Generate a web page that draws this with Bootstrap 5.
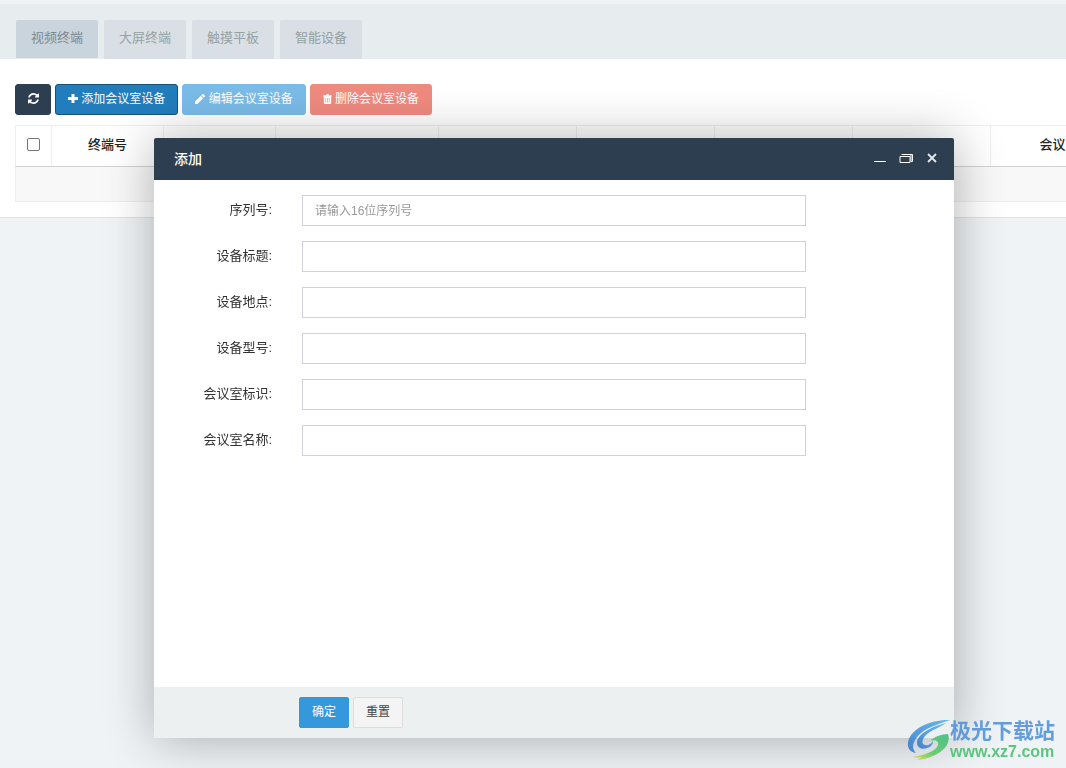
<!DOCTYPE html>
<html lang="zh-CN">
<head>
<meta charset="utf-8">
<meta name="viewport" content="width=device-width, initial-scale=1">
<title>会议室设备</title>
<link href="https://cdn.jsdelivr.net/npm/bootstrap@5.3.0/dist/css/bootstrap.min.css" rel="stylesheet">
<style>
  body { background: #eff3f6; font: 13px/20px "Liberation Sans", "Noto Sans CJK SC", sans-serif; color: #333; min-height: 100vh; overflow: hidden; }
  .device-tabs { background: #e7ecef; padding: 16px 16px 0; gap: 6px; border: 0; }
  .device-tabs .nav-link { background: #d9dfe5; color: #95a1a3; border: 0; border-radius: 2px 2px 0 0; margin: 0; padding: 8px 15px 11px; }
  .device-tabs .nav-link.active { background: #c9d4dd; color: #7d888c; margin-bottom: 1px; padding-bottom: 10px; }
  .panel-area { background: #fff; border-bottom: 1px solid #e0e3e6; padding: 25px 0 15px 15px; overflow: hidden; }
  .tool-btn { font-size: 12px; line-height: 17px; padding: 6px 12px; border-radius: 3px; color: #fff; border-width: 1px; --bs-btn-disabled-color: #fff; --bs-btn-disabled-opacity: .65; }
  .tool-btn svg { vertical-align: -1px; }
  .btn-refresh { background: #2c3e50; border-color: #2c3e50; width: 36px; padding-inline: 0; }
  .btn-add { background: #217dbb; border-color: #16527a; }
  .btn-edit, .btn-edit:disabled { background: #3498db; border-color: #3498db; }
  .btn-del, .btn-del:disabled { background: #e74c3c; border-color: #e74c3c; }
  .device-table { width: 1139px; table-layout: fixed; margin: 10px 0 0; font-size: 13px; color: #333; --bs-table-border-color: #eee; }
  .device-table th { height: 41px; padding: 0 0 2px; text-align: center; vertical-align: middle; border: 1px solid #eee; border-bottom: 1px solid #d2d2d2; font-weight: 500; color: #222; }
  .device-table td { height: 35px; padding: 0; background: #f8f8f8; border: 1px solid #eee; }
  .c-check { width: 36px; } .c-s { width: 112px; } .c-l { width: 163px; } .c-m { width: 138px; }
  .device-table .form-check-input { display: block; width: 13px; height: 13px; margin: 0 auto 2px; border: 1px solid #767676; border-radius: 2px; }
  .window-layer { position: fixed; inset: 0; padding: 138px 112px 30px 154px; }
  .window-box { background: #fff; border-radius: 2px; box-shadow: 1px 1px 50px rgba(0,0,0,.3); }
  .window-head { background: #2d3e50; color: #fff; font-size: 14px; height: 42px; padding: 0 17px 0 20px; border-radius: 2px 2px 0 0; }
  .window-head button { width: 10px; height: 16px; color: #fff; background: none; border: 0; padding: 0; display: flex; align-items: center; justify-content: center; overflow: visible; }
  .window-head button svg { flex: none; }
  .window-form { padding: 15px 0; gap: 15px; }
  .form-line { display: grid; grid-template-columns: 118px 63%; column-gap: 30px; align-items: center; }
  .form-line label { padding-bottom: 2px; }
  .form-line .form-control { height: 31px; font-size: 12px; line-height: 17px; border: 1px solid #cfd2de; border-radius: 0; padding: 6px 12px; }
  .form-line .form-control::placeholder { color: #999; }
  .window-foot { background: #ecf0f1; padding: 10px 145px; gap: 4px; }
  .foot-btn { font-size: 12px; line-height: 17px; padding: 6px 12px; border-radius: 2px; }
  .btn-ok { background: #3498db; border-color: #3498db; color: #fff; }
  .btn-reset { background: #f4f4f4; border-color: #ddd; color: #444; }
  .site-mark { position: fixed; right: 11px; bottom: 7px; opacity: .85; }
  .mark-name { color: #4a8fd6; font-size: 21px; line-height: 24px; font-weight: 700; }
  .mark-url { color: #45bd6b; font-size: 16px; line-height: 18px; font-weight: 700; text-decoration: none; }
</style>
</head>
<body>
<nav class="nav nav-tabs device-tabs mt-1">
  <a class="nav-link active" href="#">视频终端</a>
  <a class="nav-link" href="#">大屏终端</a>
  <a class="nav-link" href="#">触摸平板</a>
  <a class="nav-link" href="#">智能设备</a>
</nav>
<main class="panel-area">
  <div class="d-flex gap-1">
    <button type="button" class="btn tool-btn btn-refresh" aria-label="刷新"><svg width="11" height="11" viewBox="0 0 1536 1536" fill="currentColor"><path d="M1511 928q0 5-1 7-64 268-268 434.500T764 1536q-146 0-282.500-55T238 1324l-129 129q-19 19-45 19t-45-19-19-45V960q0-26 19-45t45-19h448q26 0 45 19t19 45-19 45l-137 137q71 66 161 102t187 36q134 0 250-65t186-179q11-17 53-117 8-23 30-23h192q13 0 22.500 9.500t9.500 22.500zM1536 128v448q0 26-19 45t-45 19h-448q-26 0-45-19t-19-45 19-45l138-138Q969 256 768 256q-134 0-250 65T332 500q-11 17-53 117-8 23-30 23H50q-13 0-22.500-9.500T18 608v-7q65-268 270-434.500T768 0q146 0 284 55.500T1297 212l130-129q19-19 45-19t45 19 19 45z"/></svg></button>
    <button type="button" class="btn tool-btn btn-add"><svg width="10" height="11" viewBox="0 0 10 11" fill="currentColor"><path d="M3.500 1h3v3H10v3H6.500v3h-3V7H0V4h3.500z"/></svg> 添加会议室设备</button>
    <button type="button" class="btn tool-btn btn-edit" disabled><svg width="10" height="10" viewBox="0 0 12 12" fill="currentColor"><path d="M0 12V9l6.800-6.800 3 3L3 12zM7.600 1.400 8.600.4a1.200 1.200 0 0 1 1.700 0l1.300 1.300a1.200 1.200 0 0 1 0 1.700l-1 1z"/></svg> 编辑会议室设备</button>
    <button type="button" class="btn tool-btn btn-del" disabled><svg width="9" height="10" viewBox="0 0 10 12" fill="currentColor" fill-rule="evenodd"><path d="M3 1.500 3.500.300h3L7 1.500h3v1.700H0V1.500zM.6 3.300h8.800V11l-.9 1H1.500l-.9-1zM2.600 4.800v5.500h.7V4.800zm2 0v5.500h.7V4.800zm2 0v5.500h.7V4.800z"/></svg> 删除会议室设备</button>
  </div>
  <table class="table device-table">
    <colgroup><col class="c-check"><col class="c-s"><col class="c-s"><col class="c-l"><col class="c-m"><col class="c-m"><col class="c-m"><col class="c-m"><col></colgroup>
    <thead><tr><th><input class="form-check-input" type="checkbox" aria-label="全选"></th><th>终端号</th><th></th><th></th><th></th><th></th><th></th><th></th><th>会议室标识</th></tr></thead>
    <tbody><tr><td colspan="9"></td></tr></tbody>
  </table>
</main>
<div class="window-layer">
  <section class="window-box d-flex flex-column h-100" role="dialog" aria-labelledby="window-title">
    <header class="window-head d-flex align-items-center">
      <span id="window-title" class="me-auto fw-medium">添加</span>
      <div class="d-flex gap-3">
        <button type="button" aria-label="最小化"><svg width="12" height="16"><path d="M0 10.500h12" stroke="#fff"/></svg></button>
        <button type="button" aria-label="最大化"><svg width="14" height="16" fill="none" stroke="#fff"><path d="M1 5.500h10v6H1zM2.500 3.500h11v7h-1.500v-7" /></svg></button>
        <button type="button" aria-label="关闭"><svg width="10" height="16" stroke="#e6e8ea" stroke-width="1.800"><path d="m1 3 8 8M9 3l-8 8"/></svg></button>
      </div>
    </header>
    <form id="device-form" class="window-form d-flex flex-column flex-grow-1">
      <div class="form-line"><label class="text-end" for="f-sn">序列号:</label><input id="f-sn" class="form-control" type="text" placeholder="请输入16位序列号"></div>
      <div class="form-line"><label class="text-end" for="f-title">设备标题:</label><input id="f-title" class="form-control" type="text"></div>
      <div class="form-line"><label class="text-end" for="f-place">设备地点:</label><input id="f-place" class="form-control" type="text"></div>
      <div class="form-line"><label class="text-end" for="f-model">设备型号:</label><input id="f-model" class="form-control" type="text"></div>
      <div class="form-line"><label class="text-end" for="f-room">会议室标识:</label><input id="f-room" class="form-control" type="text"></div>
      <div class="form-line"><label class="text-end" for="f-name">会议室名称:</label><input id="f-name" class="form-control" type="text"></div>
    </form>
    <footer class="window-foot d-flex">
      <button type="submit" form="device-form" class="btn foot-btn btn-ok">确定</button>
      <button type="reset" form="device-form" class="btn foot-btn btn-reset">重置</button>
    </footer>
  </section>
</div>
<div class="site-mark d-flex align-items-center">
  <svg width="43" height="42" viewBox="0 0 43 42" aria-hidden="true">
    <defs>
      <linearGradient id="mark-blue" x1="1" y1="0" x2="0" y2="1"><stop offset="0" stop-color="#4fb0ea"/><stop offset="1" stop-color="#2f74cc"/></linearGradient>
      <linearGradient id="mark-green" x1="1" y1="0" x2="0" y2="1"><stop offset="0" stop-color="#35b97a"/><stop offset=".6" stop-color="#5cc860"/><stop offset="1" stop-color="#e0da3c"/></linearGradient>
    </defs>
    <path d="M43 1C25 0 4 9 1 23c-1 6 2 10 8 11-5-5-3-11 2-17C18 9 29 6 43 1z" fill="url(#mark-blue)"/>
    <path d="M39 4C24 8 10 15 10 24c0 5 6 7 10 5 4-1 6-4 6-7-2 3-5 5-8 4-4-1-3-6 1-10C24 11 32 9 39 4z" fill="url(#mark-blue)"/>
    <path d="M41 15c-7 0-14 3-18 7 5-2 9 0 8 4-2 6-13 10-26 12 3 1 7 1 10 0l-5 3c14-1 29-9 31-18 1-3 1-6 0-8z" fill="url(#mark-green)"/>
  </svg>
  <div class="d-flex flex-column">
    <span class="mark-name">极光下载站</span>
    <a class="mark-url" href="#">www.xz7.com</a>
  </div>
</div>
<script src="https://cdn.jsdelivr.net/npm/bootstrap@5.3.0/dist/js/bootstrap.bundle.min.js"></script>
</body>
</html>
